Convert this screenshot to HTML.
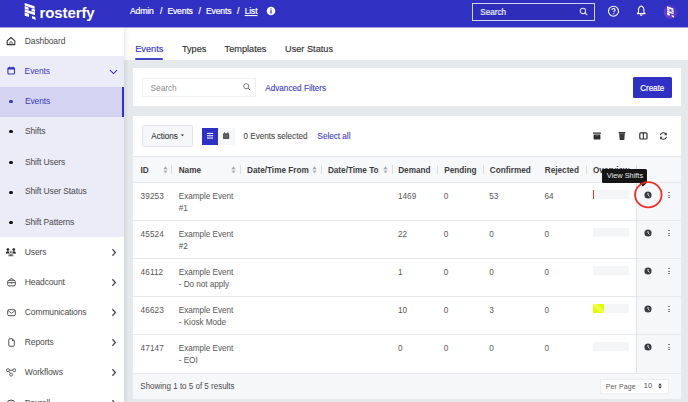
<!DOCTYPE html>
<html><head><meta charset="utf-8">
<style>
*{box-sizing:border-box;margin:0;padding:0}
html,body{width:688px;height:402px;overflow:hidden;background:#e6e9ec;font-family:"Liberation Sans", sans-serif;position:relative}
.r{position:absolute;display:block}
.t{position:absolute;white-space:nowrap}
</style></head><body>
<div class="r" style="left:124px;top:27px;width:564px;height:375px;background:#e6e9ec;"></div>
<div class="r" style="left:124px;top:27px;width:564px;height:33px;background:#fff;"></div>
<div class="r" style="left:124px;top:27px;width:5px;height:375px;background:linear-gradient(90deg,rgba(0,0,0,0.07),rgba(0,0,0,0));"></div>
<div class="r" style="left:0px;top:0px;width:688px;height:27px;background:#3030c2;"></div>
<svg class="r" style="left:22px;top:1px" width="16" height="21" viewBox="0 0 16 21"><g fill="#fff"><path d="M2.7 2.0 L12.6 5.3 L12.6 7.9 L2.7 4.6Z"/><path d="M2.7 5.1 L6.6 6.4 L6.6 9.0 L2.7 7.7Z"/><path d="M9.6 7.4 L13 8.5 L13 11.1 L9.6 10.0Z"/><path d="M2.7 8.2 L13 11.6 L13 14.2 L2.7 10.8Z"/><path d="M2.7 11.3 L7 12.7 L7 16.1 L2.7 14.7Z"/><path d="M9.8 15 L13.2 16.1 L13.8 18.8 L10.3 17.7Z"/></g></svg>
<div class="t" style="left:39.50px;top:4.65px;font-size:15px;line-height:15px;color:#fff;font-weight:700;letter-spacing:-0.1px;">rosterfy</div>
<div class="t" style="left:130.00px;top:6.99px;font-size:8.6px;line-height:8.6px;color:#fff;font-weight:400;letter-spacing:-0.15px;transform:scaleY(1.06);transform-origin:0 85%;-webkit-text-stroke:0.2px #fff">Admin</div>
<div class="t" style="left:160.00px;top:6.99px;font-size:8.6px;line-height:8.6px;color:#fff;font-weight:400;letter-spacing:-0.15px;transform:scaleY(1.06);transform-origin:0 85%;-webkit-text-stroke:0.2px #fff">/</div>
<div class="t" style="left:167.40px;top:6.99px;font-size:8.6px;line-height:8.6px;color:#fff;font-weight:400;letter-spacing:-0.15px;transform:scaleY(1.06);transform-origin:0 85%;-webkit-text-stroke:0.2px #fff">Events</div>
<div class="t" style="left:198.50px;top:6.99px;font-size:8.6px;line-height:8.6px;color:#fff;font-weight:400;letter-spacing:-0.15px;transform:scaleY(1.06);transform-origin:0 85%;-webkit-text-stroke:0.2px #fff">/</div>
<div class="t" style="left:206.00px;top:6.99px;font-size:8.6px;line-height:8.6px;color:#fff;font-weight:400;letter-spacing:-0.15px;transform:scaleY(1.06);transform-origin:0 85%;-webkit-text-stroke:0.2px #fff">Events</div>
<div class="t" style="left:237.00px;top:6.99px;font-size:8.6px;line-height:8.6px;color:#fff;font-weight:400;letter-spacing:-0.15px;transform:scaleY(1.06);transform-origin:0 85%;-webkit-text-stroke:0.2px #fff">/</div>
<div class="t" style="left:244.70px;top:6.99px;font-size:8.6px;line-height:8.6px;color:#fff;font-weight:400;letter-spacing:-0.15px;transform:scaleY(1.06);transform-origin:0 85%;-webkit-text-stroke:0.2px #fff"><span style="text-decoration:underline;text-underline-offset:0.6px">List</span></div>
<svg class="r" style="left:266px;top:6px" width="10" height="10" viewBox="0 0 10 10">
<circle cx="5" cy="5" r="4.3" fill="#fff"/><rect x="4.4" y="4.2" width="1.2" height="3.4" fill="#3030c2"/><circle cx="5" cy="2.9" r="0.7" fill="#3030c2"/></svg>
<div class="r" style="left:472px;top:3px;width:123px;height:18px;background:rgba(0,0,30,0.05);border:1.2px solid rgba(255,255,255,0.78);box-sizing:border-box"></div>
<div class="t" style="left:480.30px;top:9.12px;font-size:8.1px;line-height:8.1px;color:#fff;font-weight:400;letter-spacing:0px;transform:scaleY(1.06);transform-origin:0 85%;-webkit-text-stroke:0.2px #fff;opacity:0.92">Search</div>
<svg class="r" style="left:578px;top:6px" width="11" height="11" viewBox="0 0 11 11">
<circle cx="4.9" cy="4.9" r="2.7" fill="none" stroke="#e4e4f8" stroke-width="1.05"/><path d="M6.9 6.9 L9.2 9.2" stroke="#e4e4f8" stroke-width="1.15"/></svg>
<svg class="r" style="left:607px;top:5px" width="13" height="13" viewBox="0 0 13 13">
<circle cx="6.5" cy="6.2" r="5" fill="none" stroke="#fff" stroke-width="1.1"/>
<path d="M4.9 5 C4.9 3.9 5.7 3.5 6.5 3.5 C7.4 3.5 8.1 4.1 8.1 4.9 C8.1 5.9 6.8 6 6.8 7.2" fill="none" stroke="#fff" stroke-width="1.1"/>
<circle cx="6.8" cy="8.8" r="0.65" fill="#fff"/></svg>
<svg class="r" style="left:635px;top:4px" width="13" height="13" viewBox="0 0 13 13">
<path d="M6.2 2.3 C4.6 2.3 3.5 3.9 3.5 6 L3.5 8.4 L2.3 9.6 L10.1 9.6 L8.9 8.4 L8.9 6 C8.9 3.9 7.8 2.3 6.2 2.3Z" fill="none" stroke="#fff" stroke-width="1.05" stroke-linejoin="round"/>
<path d="M6.2 1.6 L6.2 2.4" stroke="#fff" stroke-width="1"/>
<path d="M5.1 10.9 Q6.2 12.1 7.3 10.9Z" fill="#fff" stroke="#fff" stroke-width="0.6"/></svg>
<svg class="r" style="left:662px;top:3px" width="18" height="18" viewBox="0 0 18 18"><defs><linearGradient id="avg" x1="0" y1="1" x2="1" y2="0"><stop offset="0" stop-color="#7342d2"/><stop offset="0.5" stop-color="#5b3bcc"/><stop offset="1" stop-color="#3532c6"/></linearGradient></defs><circle cx="8.7" cy="8.7" r="7" fill="url(#avg)"/><g transform="translate(3.3,2.0) scale(0.64,0.66)"><g fill="#fff"><path d="M2.7 2.0 L12.6 5.3 L12.6 7.9 L2.7 4.6Z"/><path d="M2.7 5.1 L6.6 6.4 L6.6 9.0 L2.7 7.7Z"/><path d="M9.6 7.4 L13 8.5 L13 11.1 L9.6 10.0Z"/><path d="M2.7 8.2 L13 11.6 L13 14.2 L2.7 10.8Z"/><path d="M2.7 11.3 L7 12.7 L7 16.1 L2.7 14.7Z"/><path d="M9.8 15 L13.2 16.1 L13.8 18.8 L10.3 17.7Z"/></g></g></svg>
<div class="r" style="left:0px;top:27px;width:124px;height:375px;background:#fff;"></div>
<div class="r" style="left:0px;top:27px;width:688px;height:1px;background:rgba(48,48,194,0.45);"></div>
<div class="r" style="left:0px;top:56px;width:124px;height:181px;background:#ecebf8;"></div>
<div class="r" style="left:0px;top:86.5px;width:124px;height:30.5px;background:#d4d3f2;"></div>
<div class="r" style="left:122px;top:86.5px;width:2px;height:30.5px;background:#3030c2;"></div>
<svg class="r" style="left:6px;top:35.5px" width="10" height="10" viewBox="0 0 10 10"><path d="M1.2 4.8 L5 1.5 L8.8 4.8 L8.8 8.6 L1.2 8.6Z" fill="none" stroke="#333" stroke-width="1.1" stroke-linejoin="round"/><path d="M3.8 8.6 L3.8 6.2 Q5 5 6.2 6.2 L6.2 8.6" fill="none" stroke="#4a4a4a" stroke-width="0.85"/></svg>
<div class="t" style="left:24.80px;top:36.57px;font-size:8.5px;line-height:8.5px;color:#4a4a4a;font-weight:400;letter-spacing:-0.12px;transform:scaleY(1.06);transform-origin:0 85%;">Dashboard</div>
<svg class="r" style="left:6.5px;top:66.3px" width="9" height="9" viewBox="0 0 9 9"><rect x="0.9" y="1.8" width="6.6" height="6.2" rx="1" fill="none" stroke="#3434c4" stroke-width="1.1"/><rect x="0.9" y="1.8" width="6.6" height="1.7" fill="#3434c4"/><rect x="2" y="0.6" width="1" height="1.6" fill="#3434c4"/><rect x="5.4" y="0.6" width="1" height="1.6" fill="#3434c4"/></svg>
<div class="t" style="left:24.60px;top:67.38px;font-size:8.5px;line-height:8.5px;color:#3b3bc2;font-weight:400;letter-spacing:-0.12px;transform:scaleY(1.06);transform-origin:0 85%;">Events</div>
<svg class="r" style="left:109.3px;top:69.3px" width="9" height="6" viewBox="0 0 9 6"><path d="M1 1.2 L4.5 4.6 L8 1.2" fill="none" stroke="#3434c4" stroke-width="1.1"/></svg>
<div class="r" style="left:9.4px;top:100.3px;width:3.2px;height:3.2px;border-radius:50%;background:#3434c4"></div>
<div class="t" style="left:24.90px;top:97.08px;font-size:8.5px;line-height:8.5px;color:#3b3bc2;font-weight:400;letter-spacing:-0.12px;transform:scaleY(1.06);transform-origin:0 85%;">Events</div>
<div class="r" style="left:9.4px;top:130.2px;width:3.2px;height:3.2px;border-radius:50%;background:#111"></div>
<div class="t" style="left:24.90px;top:126.97px;font-size:8.5px;line-height:8.5px;color:#4a4a4a;font-weight:400;letter-spacing:-0.12px;transform:scaleY(1.06);transform-origin:0 85%;">Shifts</div>
<div class="r" style="left:9.4px;top:160.8px;width:3.2px;height:3.2px;border-radius:50%;background:#111"></div>
<div class="t" style="left:24.90px;top:157.58px;font-size:8.5px;line-height:8.5px;color:#4a4a4a;font-weight:400;letter-spacing:-0.12px;transform:scaleY(1.06);transform-origin:0 85%;">Shift Users</div>
<div class="r" style="left:9.4px;top:190.7px;width:3.2px;height:3.2px;border-radius:50%;background:#111"></div>
<div class="t" style="left:24.90px;top:187.47px;font-size:8.5px;line-height:8.5px;color:#4a4a4a;font-weight:400;letter-spacing:-0.12px;transform:scaleY(1.06);transform-origin:0 85%;">Shift User Status</div>
<div class="r" style="left:9.4px;top:220.8px;width:3.2px;height:3.2px;border-radius:50%;background:#111"></div>
<div class="t" style="left:24.90px;top:217.58px;font-size:8.5px;line-height:8.5px;color:#4a4a4a;font-weight:400;letter-spacing:-0.12px;transform:scaleY(1.06);transform-origin:0 85%;">Shift Patterns</div>
<div class="t" style="left:24.80px;top:248.18px;font-size:8.5px;line-height:8.5px;color:#4a4a4a;font-weight:400;letter-spacing:-0.12px;transform:scaleY(1.06);transform-origin:0 85%;">Users</div>
<svg class="r" style="left:111px;top:247.9px" width="6" height="9" viewBox="0 0 6 9"><path d="M1.4 1.3 L4.4 4.5 L1.4 7.7" fill="none" stroke="#4a4a4a" stroke-width="1.3"/></svg>
<div class="t" style="left:24.80px;top:277.77px;font-size:8.5px;line-height:8.5px;color:#4a4a4a;font-weight:400;letter-spacing:-0.12px;transform:scaleY(1.06);transform-origin:0 85%;">Headcount</div>
<svg class="r" style="left:111px;top:277.5px" width="6" height="9" viewBox="0 0 6 9"><path d="M1.4 1.3 L4.4 4.5 L1.4 7.7" fill="none" stroke="#4a4a4a" stroke-width="1.3"/></svg>
<div class="t" style="left:24.80px;top:308.07px;font-size:8.5px;line-height:8.5px;color:#4a4a4a;font-weight:400;letter-spacing:-0.12px;transform:scaleY(1.06);transform-origin:0 85%;">Communications</div>
<svg class="r" style="left:111px;top:307.8px" width="6" height="9" viewBox="0 0 6 9"><path d="M1.4 1.3 L4.4 4.5 L1.4 7.7" fill="none" stroke="#4a4a4a" stroke-width="1.3"/></svg>
<div class="t" style="left:24.80px;top:338.27px;font-size:8.5px;line-height:8.5px;color:#4a4a4a;font-weight:400;letter-spacing:-0.12px;transform:scaleY(1.06);transform-origin:0 85%;">Reports</div>
<svg class="r" style="left:111px;top:338.0px" width="6" height="9" viewBox="0 0 6 9"><path d="M1.4 1.3 L4.4 4.5 L1.4 7.7" fill="none" stroke="#4a4a4a" stroke-width="1.3"/></svg>
<div class="t" style="left:24.80px;top:367.97px;font-size:8.5px;line-height:8.5px;color:#4a4a4a;font-weight:400;letter-spacing:-0.12px;transform:scaleY(1.06);transform-origin:0 85%;">Workflows</div>
<svg class="r" style="left:111px;top:367.7px" width="6" height="9" viewBox="0 0 6 9"><path d="M1.4 1.3 L4.4 4.5 L1.4 7.7" fill="none" stroke="#4a4a4a" stroke-width="1.3"/></svg>
<div class="t" style="left:24.80px;top:399.27px;font-size:8.5px;line-height:8.5px;color:#4a4a4a;font-weight:400;letter-spacing:-0.12px;transform:scaleY(1.06);transform-origin:0 85%;">Payroll</div>
<svg class="r" style="left:111px;top:399.0px" width="6" height="9" viewBox="0 0 6 9"><path d="M1.4 1.3 L4.4 4.5 L1.4 7.7" fill="none" stroke="#4a4a4a" stroke-width="1.3"/></svg>
<svg class="r" style="left:6px;top:247.8px" width="11" height="9" viewBox="0 0 11 9"><circle cx="1.9" cy="1.6" r="1.35" fill="#222"/><path d="M-0.3 5.6 Q-0.3 3.3 1.9 3.3 Q4.1 3.3 4.1 5.6Z" fill="#222"/><circle cx="7.8" cy="1.6" r="1.35" fill="#222"/><path d="M5.6 5.6 Q5.6 3.3 7.8 3.3 Q10 3.3 10 5.6Z" fill="#222"/><circle cx="4.85" cy="4" r="1.5" fill="#6a6a6a" stroke="#fff" stroke-width="0.7"/><path d="M1.9 8.6 Q1.9 5.6 4.85 5.6 Q7.8 5.6 7.8 8.6Z" fill="#6a6a6a" stroke="#fff" stroke-width="0.6"/></svg>
<svg class="r" style="left:6.5px;top:277.8px" width="9" height="9" viewBox="0 0 9 9"><path d="M2.6 2.5 Q2.6 0.8 4 0.8 L5 0.8 Q6.4 0.8 6.4 2.5" fill="none" stroke="#4a4a4a" stroke-width="0.85"/><rect x="0.7" y="2.3" width="7.6" height="5.6" rx="1.3" fill="none" stroke="#4a4a4a" stroke-width="0.95"/><path d="M0.7 4.6 L8.3 4.6" stroke="#4a4a4a" stroke-width="0.85"/><rect x="3.8" y="4" width="1.4" height="1.6" fill="#4a4a4a"/></svg>
<svg class="r" style="left:6.5px;top:308.8px" width="9" height="8" viewBox="0 0 9 8"><rect x="0.7" y="0.7" width="7.6" height="6" rx="1.3" fill="none" stroke="#4a4a4a" stroke-width="0.95"/><path d="M1.2 1.8 L4.5 4.3 L7.8 1.8" fill="none" stroke="#4a4a4a" stroke-width="0.85"/></svg>
<svg class="r" style="left:7.5px;top:337.8px" width="7" height="9" viewBox="0 0 7 9"><path d="M0.8 1.8 Q0.8 0.7 1.9 0.7 L4.3 0.7 L6.3 2.8 L6.3 7.3 Q6.3 8.3 5.3 8.3 L1.9 8.3 Q0.8 8.3 0.8 7.3Z" fill="none" stroke="#4a4a4a" stroke-width="0.95" stroke-linejoin="round"/><path d="M4 0.7 L6.3 3 L4 3Z" fill="#4a4a4a"/></svg>
<svg class="r" style="left:5.7px;top:367.5px" width="11" height="9" viewBox="0 0 11 9"><circle cx="2" cy="2.2" r="1.5" fill="none" stroke="#4a4a4a" stroke-width="0.85"/><circle cx="8.2" cy="2.2" r="1.5" fill="none" stroke="#4a4a4a" stroke-width="0.85"/><circle cx="5.1" cy="6.6" r="1.5" fill="none" stroke="#4a4a4a" stroke-width="0.85"/><path d="M3.5 2.2 L6.7 2.2 M2.8 3.4 L4.3 5.3" stroke="#4a4a4a" stroke-width="0.85"/></svg>
<svg class="r" style="left:6px;top:399px" width="10" height="10" viewBox="0 0 10 10"><circle cx="5" cy="5" r="4" fill="none" stroke="#444" stroke-width="1"/><path d="M5 2.5 L5 4.5" stroke="#444" stroke-width="1"/></svg>
<div class="t" style="left:135.20px;top:44.58px;font-size:9.2px;line-height:9.2px;color:#3636c0;font-weight:400;letter-spacing:0px;transform:scaleY(1.06);transform-origin:0 85%;-webkit-text-stroke:0.15px #3636c0">Events</div>
<div class="t" style="left:181.90px;top:44.58px;font-size:9.2px;line-height:9.2px;color:#333;font-weight:400;letter-spacing:0px;transform:scaleY(1.06);transform-origin:0 85%;-webkit-text-stroke:0.15px #333">Types</div>
<div class="t" style="left:224.60px;top:44.58px;font-size:9.2px;line-height:9.2px;color:#333;font-weight:400;letter-spacing:0px;transform:scaleY(1.06);transform-origin:0 85%;-webkit-text-stroke:0.15px #333">Templates</div>
<div class="t" style="left:285.00px;top:44.58px;font-size:9.2px;line-height:9.2px;color:#333;font-weight:400;letter-spacing:0px;transform:scaleY(1.06);transform-origin:0 85%;-webkit-text-stroke:0.15px #333">User Status</div>
<div class="r" style="left:135.3px;top:57.9px;width:27.7px;height:2px;background:#4343c6;border-radius:1px"></div>
<div class="r" style="left:133px;top:68px;width:548px;height:38px;background:#fff;"></div>
<div class="r" style="left:142.3px;top:77.9px;width:113.5px;height:19px;background:#fff;border:1px solid #eef0f2;box-sizing:border-box"></div>
<div class="t" style="left:150.60px;top:83.54px;font-size:8.3px;line-height:8.3px;color:#8a8d92;font-weight:400;letter-spacing:-0.05px;transform:scaleY(1.06);transform-origin:0 85%;">Search</div>
<svg class="r" style="left:242px;top:82px" width="10" height="10" viewBox="0 0 10 10">
<circle cx="4.2" cy="4.2" r="2.55" fill="none" stroke="#707070" stroke-width="0.95"/><path d="M6.1 6.1 L8.1 8.1" stroke="#707070" stroke-width="1"/></svg>
<div class="t" style="left:265.20px;top:84.63px;font-size:8.2px;line-height:8.2px;color:#3d3dc4;font-weight:400;letter-spacing:0px;transform:scaleY(1.06);transform-origin:0 85%;-webkit-text-stroke:0.1px #3d3dc4">Advanced Filters</div>
<div class="r" style="left:633px;top:77.1px;width:38.7px;height:20.7px;background:#3030c2;border-radius:1.5px"></div>
<div class="t" style="left:640.20px;top:84.50px;font-size:8.0px;line-height:8.0px;color:#fff;font-weight:400;letter-spacing:0px;transform:scaleY(1.06);transform-origin:0 85%;-webkit-text-stroke:0.2px #fff">Create</div>
<div class="r" style="left:133px;top:116px;width:548px;height:283px;background:#fff;"></div>
<div class="r" style="left:142.2px;top:125.3px;width:50.6px;height:21.3px;background:#f6f7f9;border:1px solid #e2e4e8;box-sizing:border-box;border-radius:1.5px"></div>
<div class="t" style="left:151.30px;top:132.92px;font-size:8.1px;line-height:8.1px;color:#333;font-weight:400;letter-spacing:0px;transform:scaleY(1.06);transform-origin:0 85%;-webkit-text-stroke:0.1px #333">Actions</div>
<svg class="r" style="left:180px;top:134px" width="5" height="3" viewBox="0 0 5 3"><path d="M0.6 0.5 L4.1 0.5 L2.35 2.3Z" fill="#333"/></svg>
<div class="r" style="left:202px;top:128px;width:15.7px;height:16.5px;background:#3030c2;"></div>
<div class="r" style="left:217.7px;top:128px;width:17px;height:16.5px;background:#f6f7f9;"></div>
<svg class="r" style="left:206px;top:132px" width="8" height="8" viewBox="0 0 8 8"><rect x="0.9" y="0.9" width="6.2" height="1.1" fill="#fff" opacity="0.92"/><rect x="0.9" y="3.2" width="6.2" height="1.1" fill="#fff" opacity="0.92"/><rect x="0.9" y="5.5" width="6.2" height="1.1" fill="#fff" opacity="0.92"/></svg>
<svg class="r" style="left:222px;top:132px" width="8" height="8" viewBox="0 0 8 8"><rect x="1" y="1.2" width="6.2" height="5.8" rx="0.7" fill="#505256"/><rect x="2" y="0.3" width="0.9" height="1.5" fill="#505256"/><rect x="5.3" y="0.3" width="0.9" height="1.5" fill="#505256"/><path d="M1.5 3.3 L6.7 3.3 M1.5 5 L6.7 5 M3.2 2.8 L3.2 6.6 M5 2.8 L5 6.6" stroke="#7d7f83" stroke-width="0.35"/></svg>
<div class="t" style="left:243.50px;top:133.12px;font-size:8.1px;line-height:8.1px;color:#4a4a4a;font-weight:400;letter-spacing:0px;transform:scaleY(1.06);transform-origin:0 85%;-webkit-text-stroke:0.1px #4a4a4a">0 Events selected</div>
<div class="t" style="left:317.60px;top:133.12px;font-size:8.1px;line-height:8.1px;color:#3d3dc4;font-weight:400;letter-spacing:0px;transform:scaleY(1.06);transform-origin:0 85%;-webkit-text-stroke:0.1px #3d3dc4">Select all</div>
<svg class="r" style="left:592px;top:131px" width="10" height="10" viewBox="0 0 10 10"><rect x="1" y="1.4" width="8" height="1.3" rx="0.3" fill="#2e2e2e"/><rect x="1.6" y="3.6" width="6.8" height="5" rx="0.5" fill="#2e2e2e"/><path d="M3.4 3.9 L5 5.2 L6.6 3.9" fill="none" stroke="#8a8a8a" stroke-width="0.6"/></svg>
<svg class="r" style="left:617px;top:131px" width="10" height="10" viewBox="0 0 10 10"><rect x="1.6" y="1.0" width="6.8" height="1.4" rx="0.5" fill="#333"/><path d="M2.2 2.6 L7.8 2.6 L7.3 9 L2.7 9Z" fill="#333"/><path d="M4 3.6 L4 8 M6 3.6 L6 8" stroke="#555" stroke-width="0.4"/></svg>
<svg class="r" style="left:639px;top:132px" width="9" height="8" viewBox="0 0 9 8"><rect x="0.8" y="0.8" width="7.2" height="6.2" rx="1" fill="none" stroke="#333" stroke-width="1.2"/><path d="M4.4 0.8 L4.4 7" stroke="#333" stroke-width="1.1"/></svg>
<svg class="r" style="left:659px;top:132px" width="9" height="8" viewBox="0 0 9 8"><path d="M1.3 3.2 A3.2 3.2 0 0 1 7.3 2.6" fill="none" stroke="#333" stroke-width="1.1"/><path d="M7.7 0.6 L7.7 3.2 L5.2 3.2Z" fill="#333"/><path d="M7.5 4.8 A3.2 3.2 0 0 1 1.5 5.4" fill="none" stroke="#333" stroke-width="1.1"/><path d="M1.1 7.4 L1.1 4.8 L3.6 4.8Z" fill="#333"/></svg>
<div class="r" style="left:133px;top:156px;width:548px;height:27px;background:#f7f8fa;border-top:1px solid #e3e6ea;border-bottom:1px solid #e3e6ea;box-sizing:border-box"></div>
<div class="t" style="left:140.60px;top:166.53px;font-size:8.2px;line-height:8.2px;color:#3c3c3c;font-weight:700;letter-spacing:0px;transform:scaleY(1.06);transform-origin:0 85%;">ID</div>
<div class="t" style="left:178.70px;top:166.53px;font-size:8.2px;line-height:8.2px;color:#3c3c3c;font-weight:700;letter-spacing:0px;transform:scaleY(1.06);transform-origin:0 85%;">Name</div>
<div class="t" style="left:247.00px;top:166.53px;font-size:8.2px;line-height:8.2px;color:#3c3c3c;font-weight:700;letter-spacing:0px;transform:scaleY(1.06);transform-origin:0 85%;">Date/Time From</div>
<div class="t" style="left:327.90px;top:166.53px;font-size:8.2px;line-height:8.2px;color:#3c3c3c;font-weight:700;letter-spacing:0px;transform:scaleY(1.06);transform-origin:0 85%;">Date/Time To</div>
<div class="t" style="left:398.20px;top:166.53px;font-size:8.2px;line-height:8.2px;color:#3c3c3c;font-weight:700;letter-spacing:0px;transform:scaleY(1.06);transform-origin:0 85%;">Demand</div>
<div class="t" style="left:444.30px;top:166.53px;font-size:8.2px;line-height:8.2px;color:#3c3c3c;font-weight:700;letter-spacing:0px;transform:scaleY(1.06);transform-origin:0 85%;">Pending</div>
<div class="t" style="left:489.80px;top:166.53px;font-size:8.2px;line-height:8.2px;color:#3c3c3c;font-weight:700;letter-spacing:0px;transform:scaleY(1.06);transform-origin:0 85%;">Confirmed</div>
<div class="t" style="left:544.80px;top:166.53px;font-size:8.2px;line-height:8.2px;color:#3c3c3c;font-weight:700;letter-spacing:0px;transform:scaleY(1.06);transform-origin:0 85%;">Rejected</div>
<div class="t" style="left:593.00px;top:166.53px;font-size:8.2px;line-height:8.2px;color:#3c3c3c;font-weight:700;letter-spacing:0px;transform:scaleY(1.06);transform-origin:0 85%;">Overview</div>
<svg class="r" style="left:163.2px;top:166px" width="5" height="8" viewBox="0 0 5 8"><path d="M0.3 3.3 L2.5 0.3 L4.7 3.3Z" fill="#a4a7ac"/><path d="M0.3 4.5 L2.5 7.5 L4.7 4.5Z" fill="#b4b7bc"/></svg>
<svg class="r" style="left:231.3px;top:166px" width="5" height="8" viewBox="0 0 5 8"><path d="M0.3 3.3 L2.5 0.3 L4.7 3.3Z" fill="#a4a7ac"/><path d="M0.3 4.5 L2.5 7.5 L4.7 4.5Z" fill="#b4b7bc"/></svg>
<svg class="r" style="left:312px;top:166px" width="5" height="8" viewBox="0 0 5 8"><path d="M0.3 3.3 L2.5 0.3 L4.7 3.3Z" fill="#a4a7ac"/><path d="M0.3 4.5 L2.5 7.5 L4.7 4.5Z" fill="#b4b7bc"/></svg>
<svg class="r" style="left:383px;top:166px" width="5" height="8" viewBox="0 0 5 8"><path d="M0.3 3.3 L2.5 0.3 L4.7 3.3Z" fill="#a4a7ac"/><path d="M0.3 4.5 L2.5 7.5 L4.7 4.5Z" fill="#b4b7bc"/></svg>
<div class="r" style="left:171.4px;top:165px;width:1px;height:9px;background:#d9dce1;"></div>
<div class="r" style="left:239.8px;top:165px;width:1px;height:9px;background:#d9dce1;"></div>
<div class="r" style="left:320.7px;top:165px;width:1px;height:9px;background:#d9dce1;"></div>
<div class="r" style="left:391.6px;top:165px;width:1px;height:9px;background:#d9dce1;"></div>
<div class="r" style="left:437.3px;top:165px;width:1px;height:9px;background:#d9dce1;"></div>
<div class="r" style="left:482.5px;top:165px;width:1px;height:9px;background:#d9dce1;"></div>
<div class="r" style="left:585.5px;top:165px;width:1px;height:9px;background:#d9dce1;"></div>
<div class="r" style="left:636.3px;top:165px;width:1px;height:9px;background:#d9dce1;"></div>
<div class="r" style="left:636px;top:183px;width:45px;height:38px;background:#f6f7f9;"></div>
<div class="r" style="left:133px;top:220px;width:548px;height:1px;background:#e6e8ec;"></div>
<div class="t" style="left:140.60px;top:192.53px;font-size:8.2px;line-height:8.2px;color:#575757;font-weight:400;letter-spacing:0.1px;transform:scaleY(1.06);transform-origin:0 85%;">39253</div>
<div class="t" style="left:178.80px;top:192.53px;font-size:8.2px;line-height:8.2px;color:#575757;font-weight:400;letter-spacing:-0.05px;transform:scaleY(1.06);transform-origin:0 85%;">Example Event</div>
<div class="t" style="left:178.80px;top:204.53px;font-size:8.2px;line-height:8.2px;color:#575757;font-weight:400;letter-spacing:-0.05px;transform:scaleY(1.06);transform-origin:0 85%;">#1</div>
<div class="t" style="left:398.00px;top:192.53px;font-size:8.2px;line-height:8.2px;color:#575757;font-weight:400;letter-spacing:0px;transform:scaleY(1.06);transform-origin:0 85%;">1469</div>
<div class="t" style="left:443.80px;top:192.53px;font-size:8.2px;line-height:8.2px;color:#575757;font-weight:400;letter-spacing:0px;transform:scaleY(1.06);transform-origin:0 85%;">0</div>
<div class="t" style="left:489.20px;top:192.53px;font-size:8.2px;line-height:8.2px;color:#575757;font-weight:400;letter-spacing:0px;transform:scaleY(1.06);transform-origin:0 85%;">53</div>
<div class="t" style="left:544.40px;top:192.53px;font-size:8.2px;line-height:8.2px;color:#575757;font-weight:400;letter-spacing:0px;transform:scaleY(1.06);transform-origin:0 85%;">64</div>
<div class="r" style="left:593px;top:190.4px;width:36px;height:9px;background:#f4f5f7;"></div>
<svg class="r" style="left:644px;top:190.5px" width="8" height="8" viewBox="0 0 8 8"><circle cx="4" cy="4" r="3.6" fill="#3a3d42"/><path d="M4 2 L4 4 L5.6 5.4" fill="none" stroke="#fff" stroke-width="0.8"/></svg>
<div class="r" style="left:668.4px;top:192.2px;width:1.3px;height:1.3px;border-radius:50%;background:#6b6e73"></div>
<div class="r" style="left:668.4px;top:194.5px;width:1.3px;height:1.3px;border-radius:50%;background:#6b6e73"></div>
<div class="r" style="left:668.4px;top:196.8px;width:1.3px;height:1.3px;border-radius:50%;background:#6b6e73"></div>
<div class="r" style="left:636px;top:221px;width:45px;height:38px;background:#f6f7f9;"></div>
<div class="r" style="left:133px;top:258px;width:548px;height:1px;background:#e6e8ec;"></div>
<div class="t" style="left:140.60px;top:230.53px;font-size:8.2px;line-height:8.2px;color:#575757;font-weight:400;letter-spacing:0.1px;transform:scaleY(1.06);transform-origin:0 85%;">45524</div>
<div class="t" style="left:178.80px;top:230.53px;font-size:8.2px;line-height:8.2px;color:#575757;font-weight:400;letter-spacing:-0.05px;transform:scaleY(1.06);transform-origin:0 85%;">Example Event</div>
<div class="t" style="left:178.80px;top:242.53px;font-size:8.2px;line-height:8.2px;color:#575757;font-weight:400;letter-spacing:-0.05px;transform:scaleY(1.06);transform-origin:0 85%;">#2</div>
<div class="t" style="left:398.00px;top:230.53px;font-size:8.2px;line-height:8.2px;color:#575757;font-weight:400;letter-spacing:0px;transform:scaleY(1.06);transform-origin:0 85%;">22</div>
<div class="t" style="left:443.80px;top:230.53px;font-size:8.2px;line-height:8.2px;color:#575757;font-weight:400;letter-spacing:0px;transform:scaleY(1.06);transform-origin:0 85%;">0</div>
<div class="t" style="left:489.20px;top:230.53px;font-size:8.2px;line-height:8.2px;color:#575757;font-weight:400;letter-spacing:0px;transform:scaleY(1.06);transform-origin:0 85%;">0</div>
<div class="t" style="left:544.40px;top:230.53px;font-size:8.2px;line-height:8.2px;color:#575757;font-weight:400;letter-spacing:0px;transform:scaleY(1.06);transform-origin:0 85%;">0</div>
<div class="r" style="left:593px;top:228.4px;width:36px;height:9px;background:#f4f5f7;"></div>
<svg class="r" style="left:644px;top:228.5px" width="8" height="8" viewBox="0 0 8 8"><circle cx="4" cy="4" r="3.6" fill="#3a3d42"/><path d="M4 2 L4 4 L5.6 5.4" fill="none" stroke="#fff" stroke-width="0.8"/></svg>
<div class="r" style="left:668.4px;top:230.2px;width:1.3px;height:1.3px;border-radius:50%;background:#6b6e73"></div>
<div class="r" style="left:668.4px;top:232.5px;width:1.3px;height:1.3px;border-radius:50%;background:#6b6e73"></div>
<div class="r" style="left:668.4px;top:234.8px;width:1.3px;height:1.3px;border-radius:50%;background:#6b6e73"></div>
<div class="r" style="left:636px;top:259px;width:45px;height:38px;background:#f6f7f9;"></div>
<div class="r" style="left:133px;top:296px;width:548px;height:1px;background:#e6e8ec;"></div>
<div class="t" style="left:140.60px;top:268.53px;font-size:8.2px;line-height:8.2px;color:#575757;font-weight:400;letter-spacing:0.1px;transform:scaleY(1.06);transform-origin:0 85%;">46112</div>
<div class="t" style="left:178.80px;top:268.53px;font-size:8.2px;line-height:8.2px;color:#575757;font-weight:400;letter-spacing:-0.05px;transform:scaleY(1.06);transform-origin:0 85%;">Example Event</div>
<div class="t" style="left:178.80px;top:280.53px;font-size:8.2px;line-height:8.2px;color:#575757;font-weight:400;letter-spacing:-0.05px;transform:scaleY(1.06);transform-origin:0 85%;">- Do not apply</div>
<div class="t" style="left:398.00px;top:268.53px;font-size:8.2px;line-height:8.2px;color:#575757;font-weight:400;letter-spacing:0px;transform:scaleY(1.06);transform-origin:0 85%;">1</div>
<div class="t" style="left:443.80px;top:268.53px;font-size:8.2px;line-height:8.2px;color:#575757;font-weight:400;letter-spacing:0px;transform:scaleY(1.06);transform-origin:0 85%;">0</div>
<div class="t" style="left:489.20px;top:268.53px;font-size:8.2px;line-height:8.2px;color:#575757;font-weight:400;letter-spacing:0px;transform:scaleY(1.06);transform-origin:0 85%;">0</div>
<div class="t" style="left:544.40px;top:268.53px;font-size:8.2px;line-height:8.2px;color:#575757;font-weight:400;letter-spacing:0px;transform:scaleY(1.06);transform-origin:0 85%;">0</div>
<div class="r" style="left:593px;top:266.4px;width:36px;height:9px;background:#f4f5f7;"></div>
<svg class="r" style="left:644px;top:266.5px" width="8" height="8" viewBox="0 0 8 8"><circle cx="4" cy="4" r="3.6" fill="#3a3d42"/><path d="M4 2 L4 4 L5.6 5.4" fill="none" stroke="#fff" stroke-width="0.8"/></svg>
<div class="r" style="left:668.4px;top:268.2px;width:1.3px;height:1.3px;border-radius:50%;background:#6b6e73"></div>
<div class="r" style="left:668.4px;top:270.5px;width:1.3px;height:1.3px;border-radius:50%;background:#6b6e73"></div>
<div class="r" style="left:668.4px;top:272.8px;width:1.3px;height:1.3px;border-radius:50%;background:#6b6e73"></div>
<div class="r" style="left:636px;top:297px;width:45px;height:38px;background:#f6f7f9;"></div>
<div class="r" style="left:133px;top:334px;width:548px;height:1px;background:#e6e8ec;"></div>
<div class="t" style="left:140.60px;top:306.53px;font-size:8.2px;line-height:8.2px;color:#575757;font-weight:400;letter-spacing:0.1px;transform:scaleY(1.06);transform-origin:0 85%;">46623</div>
<div class="t" style="left:178.80px;top:306.53px;font-size:8.2px;line-height:8.2px;color:#575757;font-weight:400;letter-spacing:-0.05px;transform:scaleY(1.06);transform-origin:0 85%;">Example Event</div>
<div class="t" style="left:178.80px;top:318.53px;font-size:8.2px;line-height:8.2px;color:#575757;font-weight:400;letter-spacing:-0.05px;transform:scaleY(1.06);transform-origin:0 85%;">- Kiosk Mode</div>
<div class="t" style="left:398.00px;top:306.53px;font-size:8.2px;line-height:8.2px;color:#575757;font-weight:400;letter-spacing:0px;transform:scaleY(1.06);transform-origin:0 85%;">10</div>
<div class="t" style="left:443.80px;top:306.53px;font-size:8.2px;line-height:8.2px;color:#575757;font-weight:400;letter-spacing:0px;transform:scaleY(1.06);transform-origin:0 85%;">0</div>
<div class="t" style="left:489.20px;top:306.53px;font-size:8.2px;line-height:8.2px;color:#575757;font-weight:400;letter-spacing:0px;transform:scaleY(1.06);transform-origin:0 85%;">3</div>
<div class="t" style="left:544.40px;top:306.53px;font-size:8.2px;line-height:8.2px;color:#575757;font-weight:400;letter-spacing:0px;transform:scaleY(1.06);transform-origin:0 85%;">0</div>
<div class="r" style="left:593px;top:304.4px;width:36px;height:9px;background:#f4f5f7;"></div>
<svg class="r" style="left:644px;top:304.5px" width="8" height="8" viewBox="0 0 8 8"><circle cx="4" cy="4" r="3.6" fill="#3a3d42"/><path d="M4 2 L4 4 L5.6 5.4" fill="none" stroke="#fff" stroke-width="0.8"/></svg>
<div class="r" style="left:668.4px;top:306.2px;width:1.3px;height:1.3px;border-radius:50%;background:#6b6e73"></div>
<div class="r" style="left:668.4px;top:308.5px;width:1.3px;height:1.3px;border-radius:50%;background:#6b6e73"></div>
<div class="r" style="left:668.4px;top:310.8px;width:1.3px;height:1.3px;border-radius:50%;background:#6b6e73"></div>
<div class="r" style="left:636px;top:335px;width:45px;height:39px;background:#f6f7f9;"></div>
<div class="r" style="left:133px;top:373px;width:548px;height:1px;background:#e6e8ec;"></div>
<div class="t" style="left:140.60px;top:344.53px;font-size:8.2px;line-height:8.2px;color:#575757;font-weight:400;letter-spacing:0.1px;transform:scaleY(1.06);transform-origin:0 85%;">47147</div>
<div class="t" style="left:178.80px;top:344.53px;font-size:8.2px;line-height:8.2px;color:#575757;font-weight:400;letter-spacing:-0.05px;transform:scaleY(1.06);transform-origin:0 85%;">Example Event</div>
<div class="t" style="left:178.80px;top:356.53px;font-size:8.2px;line-height:8.2px;color:#575757;font-weight:400;letter-spacing:-0.05px;transform:scaleY(1.06);transform-origin:0 85%;">- EOI</div>
<div class="t" style="left:398.00px;top:344.53px;font-size:8.2px;line-height:8.2px;color:#575757;font-weight:400;letter-spacing:0px;transform:scaleY(1.06);transform-origin:0 85%;">0</div>
<div class="t" style="left:443.80px;top:344.53px;font-size:8.2px;line-height:8.2px;color:#575757;font-weight:400;letter-spacing:0px;transform:scaleY(1.06);transform-origin:0 85%;">0</div>
<div class="t" style="left:489.20px;top:344.53px;font-size:8.2px;line-height:8.2px;color:#575757;font-weight:400;letter-spacing:0px;transform:scaleY(1.06);transform-origin:0 85%;">0</div>
<div class="t" style="left:544.40px;top:344.53px;font-size:8.2px;line-height:8.2px;color:#575757;font-weight:400;letter-spacing:0px;transform:scaleY(1.06);transform-origin:0 85%;">0</div>
<div class="r" style="left:593px;top:342.4px;width:36px;height:9px;background:#f4f5f7;"></div>
<svg class="r" style="left:644px;top:342.5px" width="8" height="8" viewBox="0 0 8 8"><circle cx="4" cy="4" r="3.6" fill="#3a3d42"/><path d="M4 2 L4 4 L5.6 5.4" fill="none" stroke="#fff" stroke-width="0.8"/></svg>
<div class="r" style="left:668.4px;top:344.2px;width:1.3px;height:1.3px;border-radius:50%;background:#6b6e73"></div>
<div class="r" style="left:668.4px;top:346.5px;width:1.3px;height:1.3px;border-radius:50%;background:#6b6e73"></div>
<div class="r" style="left:668.4px;top:348.8px;width:1.3px;height:1.3px;border-radius:50%;background:#6b6e73"></div>
<div class="r" style="left:636px;top:183px;width:1px;height:190px;background:#dfe2e6;"></div>
<div class="r" style="left:593px;top:190.4px;width:1.3px;height:9px;background:#e8322b;"></div>
<div class="r" style="left:593px;top:304px;width:10.8px;height:9px;background:linear-gradient(45deg,#e2fc00 0%,#e2fc00 30%,#eeff50 45%,#eeff50 58%,#e2fc00 72%,#e2fc00 100%);"></div>
<div class="r" style="left:133px;top:374px;width:548px;height:25px;background:#f6f7f9;"></div>
<div class="t" style="left:140.30px;top:382.80px;font-size:8.0px;line-height:8.0px;color:#4a4a4a;font-weight:400;letter-spacing:0px;transform:scaleY(1.06);transform-origin:0 85%;">Showing 1 to 5 of 5 results</div>
<div class="r" style="left:600.3px;top:378.5px;width:68.7px;height:15.3px;background:#fff;border:1px solid #eceef1;box-sizing:border-box"></div>
<div class="t" style="left:605.70px;top:382.65px;font-size:7.0px;line-height:7.0px;color:#5c5c5c;font-weight:400;letter-spacing:0.1px;transform:scaleY(1.06);transform-origin:0 85%;">Per Page</div>
<div class="t" style="left:643.80px;top:382.31px;font-size:7.4px;line-height:7.4px;color:#4a4a4a;font-weight:400;letter-spacing:0px;transform:scaleY(1.06);transform-origin:0 85%;">10</div>
<svg class="r" style="left:657.5px;top:383.3px" width="4" height="6" viewBox="0 0 4 6"><path d="M0.2 2.5 L2 0.2 L3.8 2.5Z" fill="#333"/><path d="M0.2 3.5 L2 5.8 L3.8 3.5Z" fill="#333"/></svg>
<div class="r" style="left:602.3px;top:168.8px;width:45.2px;height:14.5px;background:#161616;border-radius:1.5px"></div>
<svg class="r" style="left:639px;top:183px" width="8" height="4" viewBox="0 0 8 4"><path d="M0.5 0 L7.5 0 L4 3.5Z" fill="#111"/></svg>
<div class="t" style="left:606.70px;top:171.61px;font-size:7.4px;line-height:7.4px;color:#e8e8e8;font-weight:400;letter-spacing:0px;transform:scaleY(1.06);transform-origin:0 85%;">View Shifts</div>
<svg class="r" style="left:632px;top:179px" width="32" height="31" viewBox="0 0 32 31"><ellipse cx="16.3" cy="15.7" rx="13.3" ry="12.6" fill="none" stroke="#e8322b" stroke-width="1.8"/></svg>
</body></html>
